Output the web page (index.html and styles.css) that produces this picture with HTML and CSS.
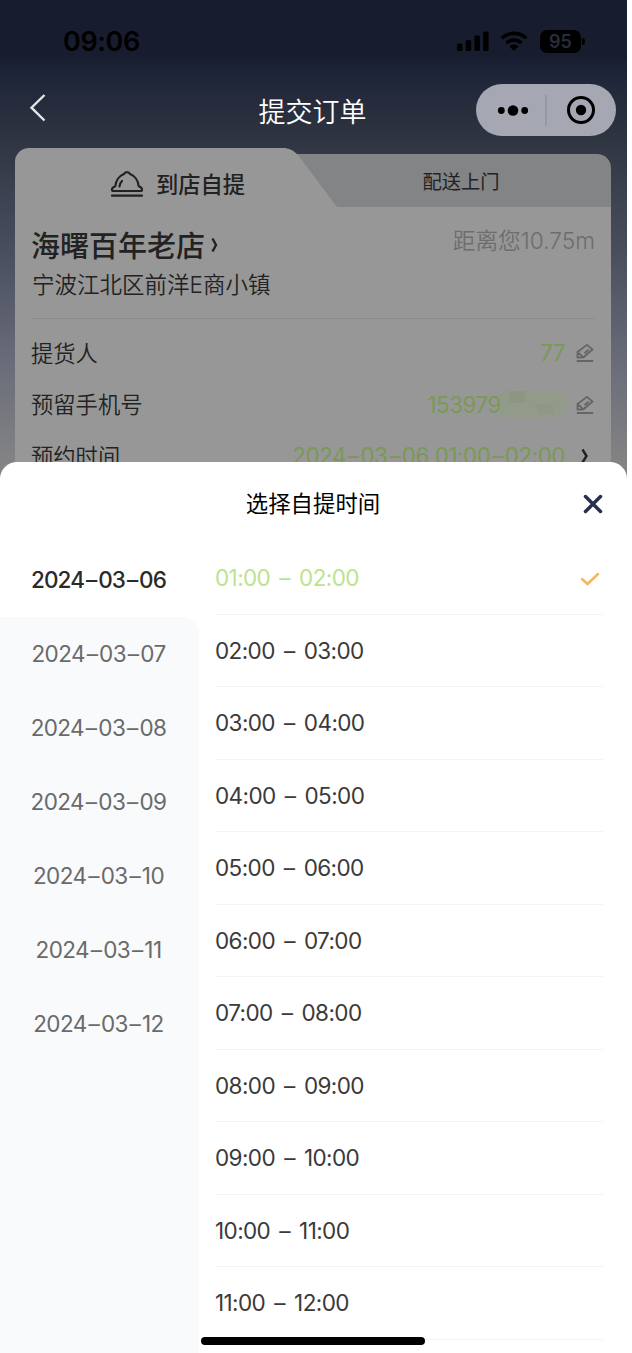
FILE: index.html
```html
<!DOCTYPE html>
<html lang="zh-CN">
<head>
<meta charset="utf-8">
<title>提交订单</title>
<link rel="stylesheet" href="styles.css">
</head>
<body>
<div class="app">
  <header class="status">
    <span class="clock">09:06</span>
    <div class="status-icons">
      <svg class="signal" width="32" height="20" viewBox="0 0 32 20"><rect x="0" y="12.500" width="5.500" height="7.500" rx="1.500"/><rect x="8.700" y="9" width="5.500" height="11" rx="1.500"/><rect x="17.400" y="4.500" width="5.500" height="15.500" rx="1.500"/><rect x="26.100" y="0.500" width="5.500" height="19.500" rx="1.500"/></svg>
      <svg class="wifi" width="28" height="20" viewBox="0 0 28 20"><path d="M1.800 7.300C8.800.7 19.200.7 26.200 7.300M6.400 12c4.400-4 10.800-4 15.200 0" fill="none" stroke="#000" stroke-width="3.600"/><path d="M9.300 15.300c2.600-2.400 6.800-2.400 9.400 0L14 20z"/></svg>
      <span class="battery">95</span><i class="battery-tip"></i>
    </div>
  </header>
  <nav class="navbar">
    <svg class="back" width="18" height="30" viewBox="0 0 18 30"><path d="M15.500 2 2.500 14.700 15.500 27.500"/></svg>
    <h1 class="title">提交订单</h1>
    <div class="capsule">
      <svg width="140" height="52" viewBox="0 0 140 52"><circle cx="25.300" cy="26.500" r="3.400"/><circle cx="37" cy="26.500" r="5.300"/><circle cx="48.700" cy="26.500" r="3.400"/><path d="M70 11v31" stroke="#858ba0"/><circle cx="105" cy="26" r="12.500" fill="none" stroke="#000" stroke-width="3"/><circle cx="105" cy="26" r="5.200"/></svg>
    </div>
  </nav>
  <main class="card">
    <div class="tabs">
      <svg class="tab-shape" width="596" height="60" viewBox="0 0 596 60"><path d="M270 6H582a14 14 0 0 1 14 14V60H270z" fill="#838485"/><path d="M0 60V14A14 14 0 0 1 14 0H268C274 0 278 2 283 7L319 55Q321 59 324 59H596V60z" fill="#979797"/></svg>
      <div class="tab active">
        <svg width="34" height="28" viewBox="0 0 34 28"><path d="M14 3C15 .5 19 .5 20 3 25 4.800 28.200 10 28.700 15.200c2 .8 3.300 1.900 3.300 3.200 0 1-.6 1.600-1.600 1.600H3.600C2.600 20 2 19.400 2 18.400c0-1.300 1.300-2.400 3.300-3.200C5.800 10 9 4.800 14 3zM9.500 15.500c.2-2.200 1-4 2.500-5.500M2 24.700h30"/></svg>
        <span>到店自提</span>
      </div>
      <div class="tab other">配送上门</div>
    </div>
    <section class="store">
      <div class="store-head"><h2>海曙百年老店</h2><svg class="go" width="9" height="18" viewBox="0 0 9 18"><path d="M2.500 2.500 6 9 2.500 15.500"/></svg><span class="distance">距离您10.75m</span></div>
      <p class="address">宁波江北区前洋E商小镇</p>
    </section>
    <section class="fields">
      <div class="field"><span>提货人</span><span class="value">77</span><svg class="edit" width="18" height="18" viewBox="0 0 18 18"><path d="M1.500 13.500V8L11 .9 16.500 5.500 7.500 13.300zM1.500 8 7.500 13.300M8.500 9.300l4-3.500M.8 17h16.400"/></svg></div>
      <div class="field"><span>预留手机号</span><span class="value">153979</span><svg class="mask" width="70" height="29" viewBox="0 0 70 29"><path d="M8 1H54Q69 2 69 12Q68 24 57 25L50 28H2L1 24V7Q3 2 8 1z" fill="#929a89"/><path d="M10 1h16v12H10z" fill="#8c9681"/><path d="M36 14h18v10H40z" fill="#8f9785"/></svg><svg class="edit" width="18" height="18" viewBox="0 0 18 18"><path d="M1.500 13.500V8L11 .9 16.500 5.500 7.500 13.300zM1.500 8 7.500 13.300M8.500 9.300l4-3.500M.8 17h16.400"/></svg></div>
      <div class="field"><span>预约时间</span><span class="value">2024<i>–</i>03<i>–</i>06 01:00<i>–</i>02:00</span><svg class="more" width="18" height="18" viewBox="0 0 18 18"><path d="M6.500 2.500 10.500 9 6.500 15.500"/></svg></div>
    </section>
  </main>
  <section class="sheet">
    <div class="sheet-head"><h2>选择自提时间</h2><svg class="close" width="20" height="20" viewBox="0 0 20 20"><path d="M2.500 2.500 17.500 17.500M17.500 2.500 2.500 17.500"/></svg></div>
    <div class="picker">
      <ul class="dates">
        <li class="selected"><span>2024<i>–</i>03<i>–</i>06</span></li><li><span>2024<i>–</i>03<i>–</i>07</span></li><li><span>2024<i>–</i>03<i>–</i>08</span></li><li><span>2024<i>–</i>03<i>–</i>09</span></li><li><span>2024<i>–</i>03<i>–</i>10</span></li><li><span>2024<i>–</i>03<i>–</i>11</span></li><li><span>2024<i>–</i>03<i>–</i>12</span></li>
      </ul>
      <ul class="times">
        <li class="selected">01:00 – 02:00<svg width="20" height="16" viewBox="0 0 20 16"><path d="M2 8 7.500 13 18 3"/></svg></li><li>02:00 – 03:00</li><li>03:00 – 04:00</li><li>04:00 – 05:00</li><li>05:00 – 06:00</li><li>06:00 – 07:00</li><li>07:00 – 08:00</li><li>08:00 – 09:00</li><li>09:00 – 10:00</li><li>10:00 – 11:00</li><li>11:00 – 12:00</li>
      </ul>
    </div>
    <i class="home-bar"></i>
  </section>
</div>
</body>
</html>
```
FILE: styles.css
```css
* { box-sizing: border-box; margin: 0; padding: 0; }
body { background: #fff; font-family: Inter, "Noto Sans CJK SC", sans-serif; }
ul { list-style: none; }
svg { display: block; flex: none; }
.app { position: relative; width: 627px; height: 1353px; overflow: hidden; background: linear-gradient(#181c2f 0, #181c2f 55px, #20263a 78px, #2d323f 130px, #3b404f 185px, #4a4f60 255px, #6a6d79 365px, #858585 470px); }
.status { display: flex; justify-content: space-between; height: 84px; padding: 26px 42px 0 63px; }
.clock { padding-top: 1px; font-size: 27px; font-weight: 600; line-height: 30px; letter-spacing: -.4px; color: #000; }
.status-icons { display: flex; height: 30px; align-items: center; }
.wifi { margin: 0 12px 0 11px; }
.battery { width: 41px; height: 23px; border-radius: 7px; background: #000; color: #292c3c; font-size: 18px; font-weight: 600; line-height: 23px; text-align: center; }
.battery-tip { width: 3px; height: 7px; margin-left: 1px; border-radius: 0 3px 3px 0; background: #000; }
.navbar { display: grid; grid-template-columns: 151px 1fr 151px; height: 64px; }
.back { margin: 9px 0 0 29px; fill: none; stroke: #e5e6ea; stroke-width: 2.4; }
.title { margin-left: -2px; color: #fff; font-size: 27px; font-weight: 350; line-height: 58px; text-align: center; }
.capsule { width: 140px; height: 52px; border-radius: 26px; background: #a5a7b2; }
.card { width: 596px; height: 340px; margin-left: 15px; border-radius: 14px 14px 0 0; background: linear-gradient(transparent 59px, #979797 59px); color: #222; }
.tabs { position: relative; display: flex; height: 76px; }
.tab-shape { position: absolute; inset: 0 auto auto 0; }
.tab { position: relative; display: flex; justify-content: center; }
.active { width: 325px; padding-top: 23px; gap: 12px; font-size: 22.300px; font-weight: 500; line-height: 27px; }
.active svg { fill: none; stroke: #222; stroke-width: 2.2; stroke-linecap: round; stroke-linejoin: round; }
.other { width: 242px; font-size: 19.300px; font-weight: 400; line-height: 68px; }
.store { height: 95px; margin: 0 16px 0 17px; border-bottom: 1px solid #8c8c8c; }
.store-head { display: flex; height: 40px; align-items: center; margin-left: -1px; }
.store h2 { font-size: 29px; font-weight: 500; }
.go { margin: 2px 0 0 5px; fill: none; stroke: #222; stroke-width: 2.4; }
.distance { margin: -10px 0 0 auto; color: #6d6d6d; font-size: 22.700px; font-weight: 350; }
.address { padding-top: 4px; font-size: 22.500px; line-height: 34px; }
.address, .field { font-weight: 350; }
.fields { padding: 8px 17px 0; }
.field { display: flex; align-items: center; height: 51.500px; font-size: 22.300px; }
.field > span:first-child { margin: -2px 0 0 -1px; }
.value { margin-left: auto; color: #7a9954; font-weight: 400; letter-spacing: -.4px; }
.value i, .dates i { margin: 0 1.800px; font-style: normal; }
.edit { margin: 1px 0 0 11px; fill: none; stroke: #656565; stroke-width: 1.8; }
.mask { margin: 0 -4px 0 -2px; }
.more { margin-left: 11px; fill: none; stroke: #222; stroke-width: 2.4; }
.sheet { position: absolute; left: 0; top: 462px; width: 627px; height: 891px; border-radius: 17px 17px 0 0; background: #fff; overflow: hidden; }
.sheet-head { display: grid; grid-template-columns: 1fr auto 1fr; align-items: center; height: 81px; }
.sheet-head h2 { grid-column: 2; margin: -2px 1px 0 0; font-size: 22.400px; font-weight: 400; color: #000; }
.close { justify-self: end; margin: 2px 24px 0 0; fill: none; stroke: #27304e; stroke-width: 3.5; stroke-linecap: round; }
.picker { display: flex; height: 810px; }
.dates { width: 199px; background: #f9fafc; font-size: 22.500px; color: #6a6a6a; }
.dates li { display: flex; height: 74px; align-items: center; justify-content: center; padding: 0 2px 1px 0; font-weight: 400; letter-spacing: -.6px; }
.dates .selected { background: #fff; color: #2a2a2a; font-weight: 500; letter-spacing: -.85px; }
.dates .selected + li { border-radius: 0 16px 0 0; box-shadow: 8px -8px 0 #fff; clip-path: inset(0); }
.times { flex: 1; margin: -1px 24px 0 16px; color: #3a3a3a; font-size: 22.500px; font-weight: 400; letter-spacing: -.6px; word-spacing: 3.400px; }
.times li { display: flex; height: 72.500px; align-items: center; border-bottom: 1px solid #f3f3f3; }
.times .selected { color: #bbe38f; }
.times svg { margin: 2px 3px 0 auto; fill: none; stroke: #f3b75f; stroke-width: 2.5; stroke-linecap: round; }
.home-bar { position: absolute; left: 201px; bottom: 8px; width: 224px; height: 8px; border-radius: 4px; background: #000; }
```
